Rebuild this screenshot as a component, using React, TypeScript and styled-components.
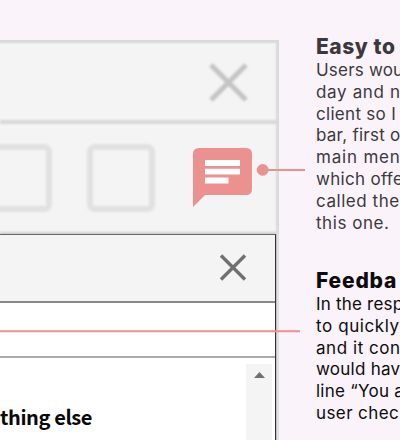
import React from "react";
import styled, { createGlobalStyle } from "styled-components";

const Global = createGlobalStyle`
  * { box-sizing: border-box; }
  body { margin: 0; background: #faf3fa; }
`;

const Page = styled.main`
  position: relative;
  display: grid;
  grid-template-columns: 279px 1fr;
  column-gap: 37px;
  width: 400px;
  height: 440px;
  overflow: hidden;
  background: #faf3fa;
`;

const BackWindow = styled.section`
  display: flex;
  flex-direction: column;
  height: 400px;
  margin-top: 40px;
  background: #f4f4f4;
  box-shadow: inset -3px 3px 2px #dadada;
`;

const BackTitle = styled.header`
  display: flex;
  align-items: center;
  justify-content: flex-end;
  flex: none;
  height: 83px;
  padding: 3px 26px 0 0;
`;

const SoftRule = styled.hr`
  flex: none;
  width: 278px;
  height: 4px;
  margin: -3px 0 0;
  border: 0;
  background: #d8d8d8;
  filter: blur(1px);
`;

const BackToolbar = styled.div`
  display: flex;
  flex: none;
  height: 110px;
  padding-top: 20px;
`;

const ToolSlot = styled.div<{ $open?: boolean }>`
  width: ${(p) => (p.$open ? 63 : 68)}px;
  height: 68px;
  margin-left: ${(p) => (p.$open ? -11 : 35)}px;
  border: 6px solid #e1e1e1;
  border-radius: 8px;
  filter: blur(1.3px);
`;

const Comment = styled.svg`
  width: 59px;
  height: 60px;
  margin: 4px 0 0 38px;
`;

const FrontWindow = styled.section`
  display: flex;
  flex-direction: column;
  flex: 1;
  width: 276px;
  border-top: 1px solid #666;
  border-right: 1px solid #333;
  background: #fff;
  box-shadow: 0 -2px 2px #cfcfcf, 1px 0 0 #bbb, 3px 0 0 #e2e2e2;
`;

const FrontTitle = styled.header`
  display: flex;
  align-items: center;
  justify-content: flex-end;
  flex: none;
  height: 68px;
  padding: 0 28px 1px 0;
  border-bottom: 2px solid #888;
  background: #f4f4f4;
`;

const FieldRow = styled.div`
  flex: none;
  height: 55px;
  border-bottom: 2px solid #aaa;
`;

const Content = styled.div`
  display: flex;
  justify-content: space-between;
  flex: 1;
  padding: 6px 3px 0 0;
`;

const Question = styled.strong`
  margin-top: 35px;
  font: 700 20px/36px "Noto Sans CJK SC", sans-serif;
  letter-spacing: -0.4px;
  color: #080808;
  white-space: nowrap;
`;

const Scrollbar = styled.div`
  display: flex;
  justify-content: center;
  width: 26px;
  padding-top: 8px;
  background: #f4f4f4;
`;

const Notes = styled.aside`
  padding-top: 35px;
  white-space: nowrap;
`;

const Note = styled.article<{ $strong?: boolean }>`
  height: 234px;
  color: ${(p) => (p.$strong ? "#0d0b0d" : "#3c393d")};
`;

const NoteTitle = styled.h2<{ $track: number }>`
  margin: 0 0 1px;
  font: 800 21px/24px Inter, sans-serif;
  letter-spacing: ${(p) => p.$track}px;
`;

const Line = styled.p<{ $track: number }>`
  margin: 0;
  font: 400 17px/21.8px Inter, sans-serif;
  letter-spacing: ${(p) => p.$track}px;
`;

const Callout = styled.svg`
  position: absolute;
  inset: 0;
  pointer-events: none;
`;

type NoteData = { title: string; track: number; strong?: boolean; lines: [string, number][] };

const notes: NoteData[] = [
  {
    title: "Easy to",
    track: 0.55,
    lines: [
      ["Users wou", 0.2],
      ["day and n", 0.65],
      ["client so I", 0.3],
      ["bar, first o", 0.25],
      ["main men", 0.8],
      ["which offe", 0.3],
      ["called the", 0.55],
      ["this one.", 0.55],
    ],
  },
  {
    title: "Feedba",
    track: 0.8,
    strong: true,
    lines: [
      ["In the resp", 0.2],
      ["to quickly", 0.6],
      ["and it con", 0.55],
      ["would hav", 0.25],
      ["line “You a", 0.25],
      ["user chec", 0.4],
    ],
  },
];

export default function App() {
  return (
    <Page>
      <Global />
      <BackWindow>
        <BackTitle>
          <svg width="48" height="48" viewBox="0 0 48 48">
            <defs>
              <filter id="soft">
                <feGaussianBlur stdDeviation="1" />
              </filter>
            </defs>
            <path d="M6 6L41 41M41 6L6 41" stroke="#c4c4c4" strokeWidth="5" filter="url(#soft)" />
          </svg>
        </BackTitle>
        <SoftRule />
        <BackToolbar>
          <ToolSlot $open />
          <ToolSlot />
          <Comment viewBox="0 0 59 60">
            <path
              d="M6 0H53Q59 0 59 6V41Q59 47 53 47H12L0 59V6Q0 0 6 0Z"
              fill="#eb918f"
            />
            <path d="M12 12H47V18H12ZM12 20.7H47V26.5H12ZM12 29.5H35.5V35.5H12Z" fill="#fff" />
          </Comment>
        </BackToolbar>
        <FrontWindow>
          <FrontTitle>
            <svg width="28" height="28" viewBox="0 0 28 28">
              <path d="M2 1.5L26 25.5M26 1.5L2 25.5" stroke="#707070" strokeWidth="3.4" />
            </svg>
          </FrontTitle>
          <FieldRow />
          <Content>
            <Question>thing else</Question>
            <Scrollbar>
              <svg width="11" height="6" viewBox="0 0 11 6">
                <path d="M0 6L5.5 0L11 6Z" fill="#707070" />
              </svg>
            </Scrollbar>
          </Content>
        </FrontWindow>
      </BackWindow>
      <Notes>
        {notes.map((note) => (
          <Note key={note.title} $strong={note.strong}>
            <NoteTitle $track={note.track}>{note.title}</NoteTitle>
            {note.lines.map(([text, track]) => (
              <Line key={text} $track={track}>
                {text}
              </Line>
            ))}
          </Note>
        ))}
      </Notes>
      <Callout width="400" height="440" viewBox="0 0 400 440">
        <circle cx="262.7" cy="169.8" r="5.9" fill="#eb918f" />
        <path d="M262 170H305" stroke="#eb918f" strokeWidth="2" />
        <path d="M0 331.3H300" stroke="#eb918f" strokeWidth="2" />
      </Callout>
    </Page>
  );
}
